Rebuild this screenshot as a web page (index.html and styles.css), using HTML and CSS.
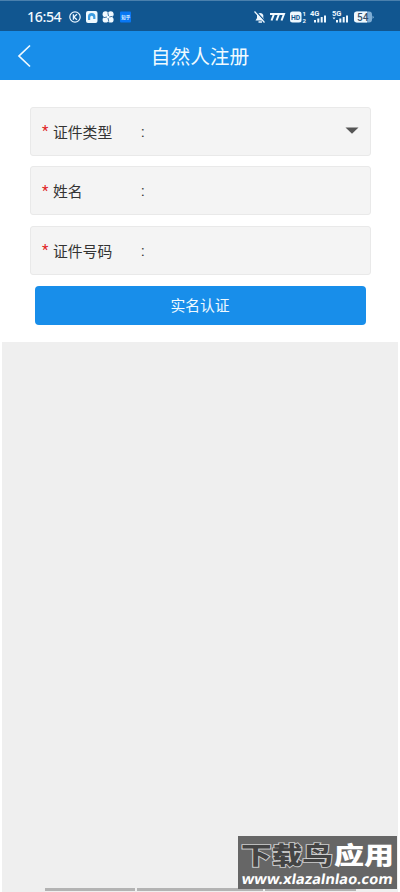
FILE: index.html
```html
<!DOCTYPE html>
<html lang="zh-CN">
<head>
<meta charset="utf-8">
<meta name="viewport" content="width=device-width, initial-scale=1">
<title>自然人注册</title>
<link rel="stylesheet" href="styles.css">
</head>
<body>
<div class="screen">
  <div class="status">
    <span class="time">16:54</span>
    <svg class="status-left" width="64" height="14" viewBox="0 0 64 14">
      <circle cx="7" cy="7" r="5.2" fill="none" stroke="#e8f5ff" stroke-width="1.2"/>
      <path d="M5.4 4.2v5.6M9 4.3 5.8 7 9 9.8" fill="none" stroke="#e8f5ff" stroke-width="1.3"/>
      <rect x="18" y="1" width="11.500" height="12" rx="2" fill="#eef9ff"/>
      <path d="M20 10V6.800a3.700 3.700 0 0 1 7.400 0V9h-2.200V7.200a1.500 1.500 0 0 0-3 0V10z" fill="#3b9de2"/>
      <g fill="#f2faff"><circle cx="37.500" cy="4.200" r="2.900"/><circle cx="42.700" cy="4.200" r="2.900"/><circle cx="37.500" cy="9.700" r="2.900"/><circle cx="42.700" cy="9.700" r="2.900"/><circle cx="40" cy="7" r="1.500"/></g>
      <path d="M39.800 2.500 40.500 6M44.500 6.300 41.300 7M40.800 11.500 40 8M35.500 7.700 39 7" stroke="#115690" stroke-width=".8"/>
      <rect x="52" y="1.500" width="11" height="11" rx="1" fill="#0877f4"/>
      <text class="zhihu" x="53.200" y="8.700">知乎</text>
    </svg>
    <svg class="status-right" width="122" height="16" viewBox="0 0 122 16">
      <path d="M2.500 11.500h9L10.300 9V6a3.400 3.400 0 0 0-6.300 0v3zM5.500 12.300h3.500v1.500H5.500z" fill="#eef8ff"/>
      <path d="m2.600 2 10 11" stroke="#115690" stroke-width="1.200"/>
      <path d="m1.500 2.500 10 11" stroke="#eef8ff" stroke-width="1.200"/>
      <path d="M17 5h4l-2.500 6.500M22 5h4l-2.500 6.500M27 5h4l-2.500 6.500" fill="none" stroke="#f2faff" stroke-width="2"/>
      <rect x="37" y="2.500" width="11.500" height="11" rx="2.500" fill="#eef8ff"/>
      <text class="hd" x="38" y="10.600">HD</text>
      <text class="tiny" x="49.500" y="7">1</text><text class="tiny" x="49.500" y="13.500">2</text>
      <text class="net" x="57" y="7">4G</text><text class="net" x="79" y="7">5G</text>
      <path d="M62 11v2.500M65.300 9.500v4M68.700 8v5.500M72 6.500v7M84 11v2.500M87.300 9.500v4M90.700 8v5.500M94 6.500v7" stroke="#eef8ff" stroke-width="2"/>
      <path d="M79.500 8.500h3l-1.500 2z" fill="#eef8ff"/>
      <rect x="101" y="2.500" width="18" height="11" rx="3" fill="#7faed5"/>
      <path d="M104 2.500h10v11h-10a3 3 0 0 1-3-3v-5a3 3 0 0 1 3-3z" fill="#eef8ff"/>
      <path d="m119.500 6.500 1.500 1.700-1.500 1.700z" fill="#7faed5"/>
      <text class="battery" x="104" y="11.800">54</text>
    </svg>
  </div>
  <header class="bar">
    <svg class="back" width="16" height="24" viewBox="0 0 16 24"><path d="M13 1.500 2 12l11 10.500" fill="none" stroke="#f0faff" stroke-width="1.700"/></svg>
    <h1 class="title">自然人注册</h1>
  </header>
  <main class="form">
    <div class="field"><span class="star">*</span><span class="label">证件类型</span><span class="colon">:</span>
      <svg class="caret" width="14" height="7" viewBox="0 0 14 7"><path d="M.5.500h13L7 6.800z" fill="#555"/></svg>
    </div>
    <div class="field"><span class="star">*</span><span class="label">姓名</span><span class="colon">:</span></div>
    <div class="field"><span class="star">*</span><span class="label">证件号码</span><span class="colon">:</span></div>
    <button class="submit">实名认证</button>
  </main>
  <div class="rest"></div>
  <div class="nav"><i class="nav-a"></i><i class="nav-b"></i><i class="nav-c"></i></div>
  <svg class="watermark" width="159" height="53" viewBox="0 0 159 53">
    <g transform="scale(1 .86)">
      <text class="wm-dark" x="3" y="33" textLength="92" lengthAdjust="spacingAndGlyphs">下载鸟</text>
      <text class="wm-light" x="96" y="33" textLength="60" lengthAdjust="spacingAndGlyphs">应用</text>
    </g>
    <g transform="translate(3 48) skewX(-9)">
      <text class="wm-url" x="0" y="0" textLength="151" lengthAdjust="spacingAndGlyphs">www.xlazalnlao.com</text>
    </g>
  </svg>
</div>
</body>
</html>
```
FILE: styles.css
```css
* { box-sizing: border-box; }
body { margin: 0; background: #fff; font-family: Roboto, "Noto Sans CJK SC", sans-serif; }
.screen { position: relative; width: 400px; height: 892px; display: flex; flex-direction: column; overflow: hidden; }
.status { height: 31px; background: #115690; border-top: 1px solid #4a80ad; display: flex; align-items: center; padding: 1px 25px 0 27px; color: #f2faff; }
.time { width: 41px; font: 500 14.200px/16px "Noto Sans", sans-serif; letter-spacing: -.4px; }
.status-right { margin-left: auto; }
.zhihu { font: 700 4.500px "Noto Sans CJK SC", sans-serif; fill: #d5edff; }
.hd { font: 700 6.800px Roboto, sans-serif; fill: #115690; }
.tiny { font: 700 6px Roboto, sans-serif; fill: #eef8ff; }
.net { font: 700 7.500px Roboto, sans-serif; fill: #eef8ff; }
.battery { font: 500 10px Roboto, sans-serif; fill: #31506c; }
.bar { height: 49px; background: #188eea; display: grid; grid-template-columns: 40px 1fr 40px; align-items: center; }
.back { margin-left: 17px; }
.title { margin: 5px 0 0; text-align: center; font-size: 19.700px; line-height: 28px; font-weight: 400; color: #f0faff; }
.form { height: 261.500px; padding: 26.500px 29.500px 0 30px; display: flex; flex-direction: column; gap: 10.500px; }
.field { height: 49.200px; flex: none; display: flex; align-items: center; padding: 0 11px 0 11px; background: #f4f4f4; border: 1px solid #e9e9e9; border-radius: 3px; font-size: 14.800px; color: #333; }
.star { width: 11px; color: #e02020; }
.label { width: 88px; }
.colon { padding-top: 1px; }
.caret { margin-left: auto; margin-top: -2px; }
.submit { height: 39.500px; flex: none; margin: 0 5px 0 4.500px; padding: 2px 0 0; background: #188eea; border: 0; border-radius: 4px; color: #f0faff; font: 400 14.800px/20px Roboto, "Noto Sans CJK SC", sans-serif; }
.rest { flex: 1; margin: 0 2px 0 2px; background: #efefef; }
.nav { height: 4px; margin: 0 2px; padding-left: 43px; display: flex; gap: 2px; background: #efefef; }
.nav i { height: 3px; background: #b3b3b3; }
.nav-a { width: 90px; }
.nav-b { width: 126px; }
.nav-c { width: 91px; }
.watermark { position: absolute; left: 238px; top: 836px; background: #666; }
.wm-dark, .wm-light { font: 900 28px "Noto Sans CJK SC", sans-serif; }
.wm-dark { fill: #444; stroke: #ccc; stroke-width: 2px; paint-order: stroke; }
.wm-light { fill: #fff; }
.wm-url { font: 700 14px "Noto Sans", sans-serif; fill: #fff; }
```
